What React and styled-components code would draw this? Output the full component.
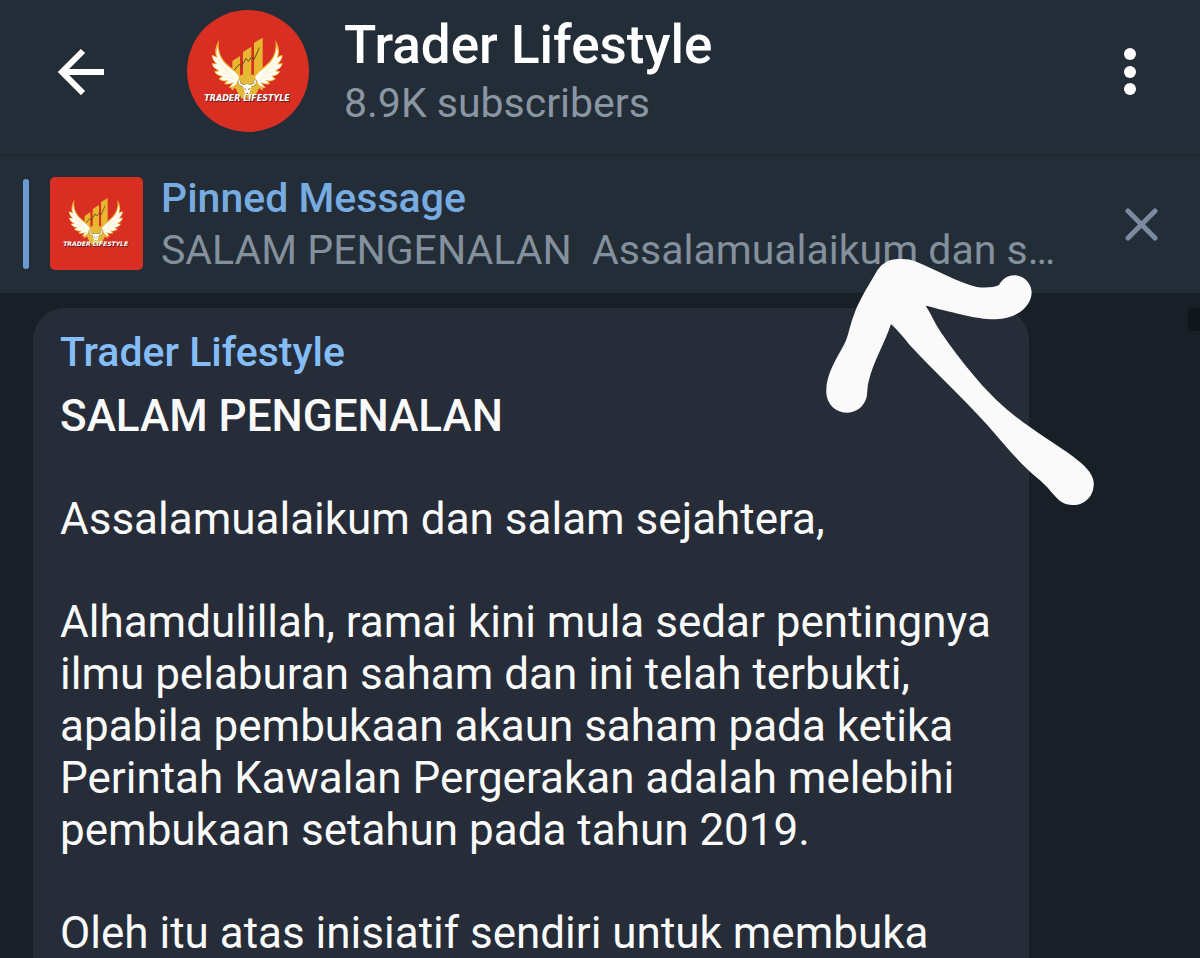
import React from "react";
import styled, { createGlobalStyle } from "styled-components";

const GlobalStyle = createGlobalStyle`
  * { box-sizing: border-box; }
  html, body, #root { height: 100%; }
  body {
    margin: 0;
    background: #181f26;
    font-family: Roboto, "Liberation Sans", sans-serif;
  }
`;

const Screen = styled.div`
  height: 100%;
  display: flex;
  flex-direction: column;
  overflow: hidden;
  position: relative;
`;

const Header = styled.header`
  flex: none;
  display: flex;
  align-items: center;
  height: 154px;
  padding: 0 36px 12px 47px;
  background: #232d38;
`;

const IconButton = styled.button`
  flex: none;
  display: grid;
  place-items: center;
  width: 68px;
  height: 68px;
  padding: 0;
  border: 0;
  background: none;
  color: ${(p) => p.$color || "#ffffff"};
`;

const Avatar = styled.svg`
  flex: none;
  display: block;
  width: ${(p) => p.$size}px;
  height: ${(p) => p.$size}px;
  border-radius: ${(p) => p.$radius};
  background: #d82f22;
`;

const Profile = styled.div`
  flex: 1;
  min-width: 0;
  display: flex;
  align-items: center;
  gap: 35px;
  padding-left: 72px;
`;

const Heading = styled.div`
  flex: 1;
  min-width: 0;
`;

const ChannelName = styled.h1`
  margin: 0;
  font-size: 53px;
  line-height: 64px;
  font-weight: 500;
  color: #ffffff;
`;

const Subscribers = styled.p`
  margin: 0;
  font-size: 41px;
  line-height: 52px;
  color: #8b96a3;
`;

const PinnedBar = styled.section`
  flex: none;
  display: flex;
  align-items: center;
  height: 139px;
  padding: 0 24px 2px 23px;
  background: #232d38;
  border-top: 2px solid #202832;
`;

const PinMarker = styled.span`
  flex: none;
  width: 6px;
  height: 90px;
  margin-right: 21px;
  border-radius: 3px;
  background: #6c9bd2;
`;

const PinnedText = styled.div`
  flex: 1;
  min-width: 0;
  padding: 0 40px 0 18px;
`;

const PinnedTitle = styled.h2`
  margin: 0;
  font-size: 41px;
  line-height: 52px;
  font-weight: 500;
  color: #78ace0;
`;

const PinnedPreview = styled.p`
  margin: 0;
  font-size: 41px;
  line-height: 52px;
  color: #84909c;
  white-space: pre;
  overflow: hidden;
  text-overflow: ellipsis;
`;

const Chat = styled.main`
  flex: 1;
  min-height: 0;
  padding: 15px 171px 0 33px;
  overflow-y: auto;
  scrollbar-width: none;
`;

const Bubble = styled.article`
  padding: 18px 27px;
  border-radius: 32px 32px 0 0;
  background: #262d39;
  color: #fafafa;
`;

const Sender = styled.a`
  display: block;
  font-size: 41px;
  line-height: 52px;
  font-weight: 500;
  color: #85bdf9;
  text-decoration: none;
`;

const MessageTitle = styled.h3`
  margin: 12px 0 51px;
  font-size: 44px;
  line-height: 52px;
  font-weight: 500;
`;

const Paragraph = styled.p`
  margin: 0 0 51px;
  font-size: 44px;
  line-height: 52px;
`;

const Pointer = styled.svg`
  position: absolute;
  top: 240px;
  right: 90px;
  width: 300px;
  height: 280px;
  pointer-events: none;
`;

const EdgeTab = styled.span`
  position: absolute;
  top: 308px;
  right: 0;
  width: 12px;
  height: 23px;
  background: #11161d;
`;

const LogoText = styled.text`
  font: italic 700 24px "DejaVu Sans", sans-serif;
  fill: ${(p) => p.$fill};
`;

const WING =
  "M117 105 C105 124 103 142 109 155 C101 151 97 150 95 150 C96 162 101 169 108 175 C101 175 97 174 95 174 C98 187 106 193 114 196 C109 198 105 199 102 199 C108 210 117 214 125 215 L115 221 C122 228 131 230 139 229 L132 236 C140 240 150 239 157 235 L145 249 L153 248 L156 257 L168 246 L174 258 L186 240 C186 220 176 205 157 190 C128 167 112 147 117 105 Z";
const FEATHERS =
  "M113 126 C108 138 109 148 113 160 C107 156 101 153 97 153 C99 163 104 171 113 178 C107 178 101 178 97 177 C101 188 109 193 119 197 C114 200 109 201 105 201 C111 209 120 212 130 213 L119 221 C127 227 136 227 146 225 L137 235 C146 237 156 234 163 230 L150 247 C158 246 165 241 171 235 L176 248 L184 236 C183 219 172 206 154 193 C131 175 116 158 113 126 Z";

function Wing() {
  return (
    <>
      <path d={WING} fill="#efb536" />
      <path d={FEATHERS} fill="#fffdf4" />
      <path
        d="M114 163 C121 178 133 187 145 194 M118 181 C129 191 141 198 153 204 M124 200 C136 205 148 210 160 214 M135 216 C146 218 156 221 166 223"
        fill="none"
        stroke="#f8e6ba"
        strokeWidth="2"
      />
    </>
  );
}

function ChannelLogo({ size, radius }) {
  return (
    <Avatar $size={size} $radius={radius} viewBox="21 15 366 366" role="img" aria-label="Trader Lifestyle logo">
      <g fill="#e8b62f">
        <path d="M157 168 L180 153 V220 H157 Z" />
        <path d="M189 141 L214 125 V220 H189 Z" />
        <path d="M222 113 L248 98 V200 L222 220 Z" />
      </g>
      <path
        d="M161 198 L177 178 L184 185 L198 160 L205 169 L214 157 L222 164 L238 128"
        fill="none"
        stroke="#5e4a1c"
        strokeWidth="3"
      />
      <path d="M183 209 H221 L242 242 L221 280 H183 L162 242 Z" fill="#e4b93a" />
      <Wing />
      <g transform="translate(403 0) scale(-1 1)">
        <Wing />
      </g>
      <path d="M180 212 H223 L238 242 L221 280 H183 L166 242 Z" fill="#e4b93a" />
      <path d="M178 226 C175 239 185 243 201 242 C217 243 228 239 225 226" fill="none" stroke="#8c7434" strokeWidth="8" />
      <path d="M178 226 C175 239 185 243 201 242 C217 243 228 239 225 226" fill="none" stroke="#ffffff" strokeWidth="5" />
      <path d="M188 241 L201 238 L215 241 L212 249 L209 262 L205 270 H198 L194 262 L191 249 Z" fill="#ffffff" />
      <path d="M194 250 L199 254 M209 250 L204 254 M199 265 H204" stroke="#6b5a2c" strokeWidth="3" />
      <LogoText x="75" y="291" $fill="#5b1a12">TRADER LIFESTYLE</LogoText>
      <LogoText x="73" y="288" $fill="#ffffff">TRADER LIFESTYLE</LogoText>
    </Avatar>
  );
}

export default function App() {
  return (
    <>
      <GlobalStyle />
      <Screen>
        <Header>
          <IconButton aria-label="Back">
            <svg width="48" height="48" viewBox="0 0 48 48" fill="none" stroke="currentColor" strokeWidth="6">
              <path d="M47 25 H6 M26 4 L5 25 L26 46" />
            </svg>
          </IconButton>
          <Profile>
            <ChannelLogo size={122} radius="50%" />
            <Heading>
              <ChannelName>Trader Lifestyle</ChannelName>
              <Subscribers>8.9K subscribers</Subscribers>
            </Heading>
          </Profile>
          <IconButton aria-label="More options">
            <svg width="12" height="48" viewBox="0 0 12 48" fill="currentColor">
              <circle cx="6" cy="7" r="6" />
              <circle cx="6" cy="25" r="6" />
              <circle cx="6" cy="42" r="6" />
            </svg>
          </IconButton>
        </Header>

        <PinnedBar>
          <PinMarker />
          <ChannelLogo size={93} radius="5px" />
          <PinnedText>
            <PinnedTitle>Pinned Message</PinnedTitle>
            <PinnedPreview>{"SALAM PENGENALAN  Assalamualaikum dan s…"}</PinnedPreview>
          </PinnedText>
          <IconButton aria-label="Close pinned message" $color="#7c8aa0">
            <svg width="34" height="34" viewBox="0 0 34 34" fill="none" stroke="currentColor" strokeWidth="5" strokeLinecap="round">
              <path d="M3 4 L30 31 M30 4 L3 31" />
            </svg>
          </IconButton>
        </PinnedBar>

        <Chat>
          <Bubble>
            <Sender href="#channel">Trader Lifestyle</Sender>
            <MessageTitle>SALAM PENGENALAN</MessageTitle>
            <Paragraph>Assalamualaikum dan salam sejahtera,</Paragraph>
            <Paragraph>
              Alhamdulillah, ramai kini mula sedar pentingnya ilmu pelaburan saham dan ini telah terbukti, apabila
              pembukaan akaun saham pada ketika Perintah Kawalan Pergerakan adalah melebihi pembukaan setahun pada
              tahun 2019.
            </Paragraph>
            <Paragraph>Oleh itu atas inisiatif sendiri untuk membuka</Paragraph>
          </Bubble>
        </Chat>

        <EdgeTab />
        <Pointer viewBox="0 0 900 840" aria-hidden="true">
          <path
            fill="#fafafa"
            d="M243 252 C222 315 190 365 177 420 C171 440 173 455 170 471 C162 500 140 518 109 518 C76 518 51 492 49 460 C46 405 78 360 103 312 C115 290 117 262 132 224 C148 178 180 130 202 91 C217 68 240 57 264 57 C285 56 300 57 319 65 C380 90 440 125 500 141 C526 144 549 143 567 135 C578 117 592 106 613 106 C643 106 665 130 665 158 C663 200 620 236 557 238 C510 240 420 215 347 197 C365 225 375 250 392 276 C450 360 525 455 600 516 C665 570 735 610 790 650 C820 673 848 697 851 726 C854 765 827 795 790 795 C770 796 755 789 741 775 C722 755 713 741 690 721 C630 673 580 610 530 553 C465 480 370 392 297 313 C278 287 260 268 243 252 Z"
          />
        </Pointer>
      </Screen>
    </>
  );
}
